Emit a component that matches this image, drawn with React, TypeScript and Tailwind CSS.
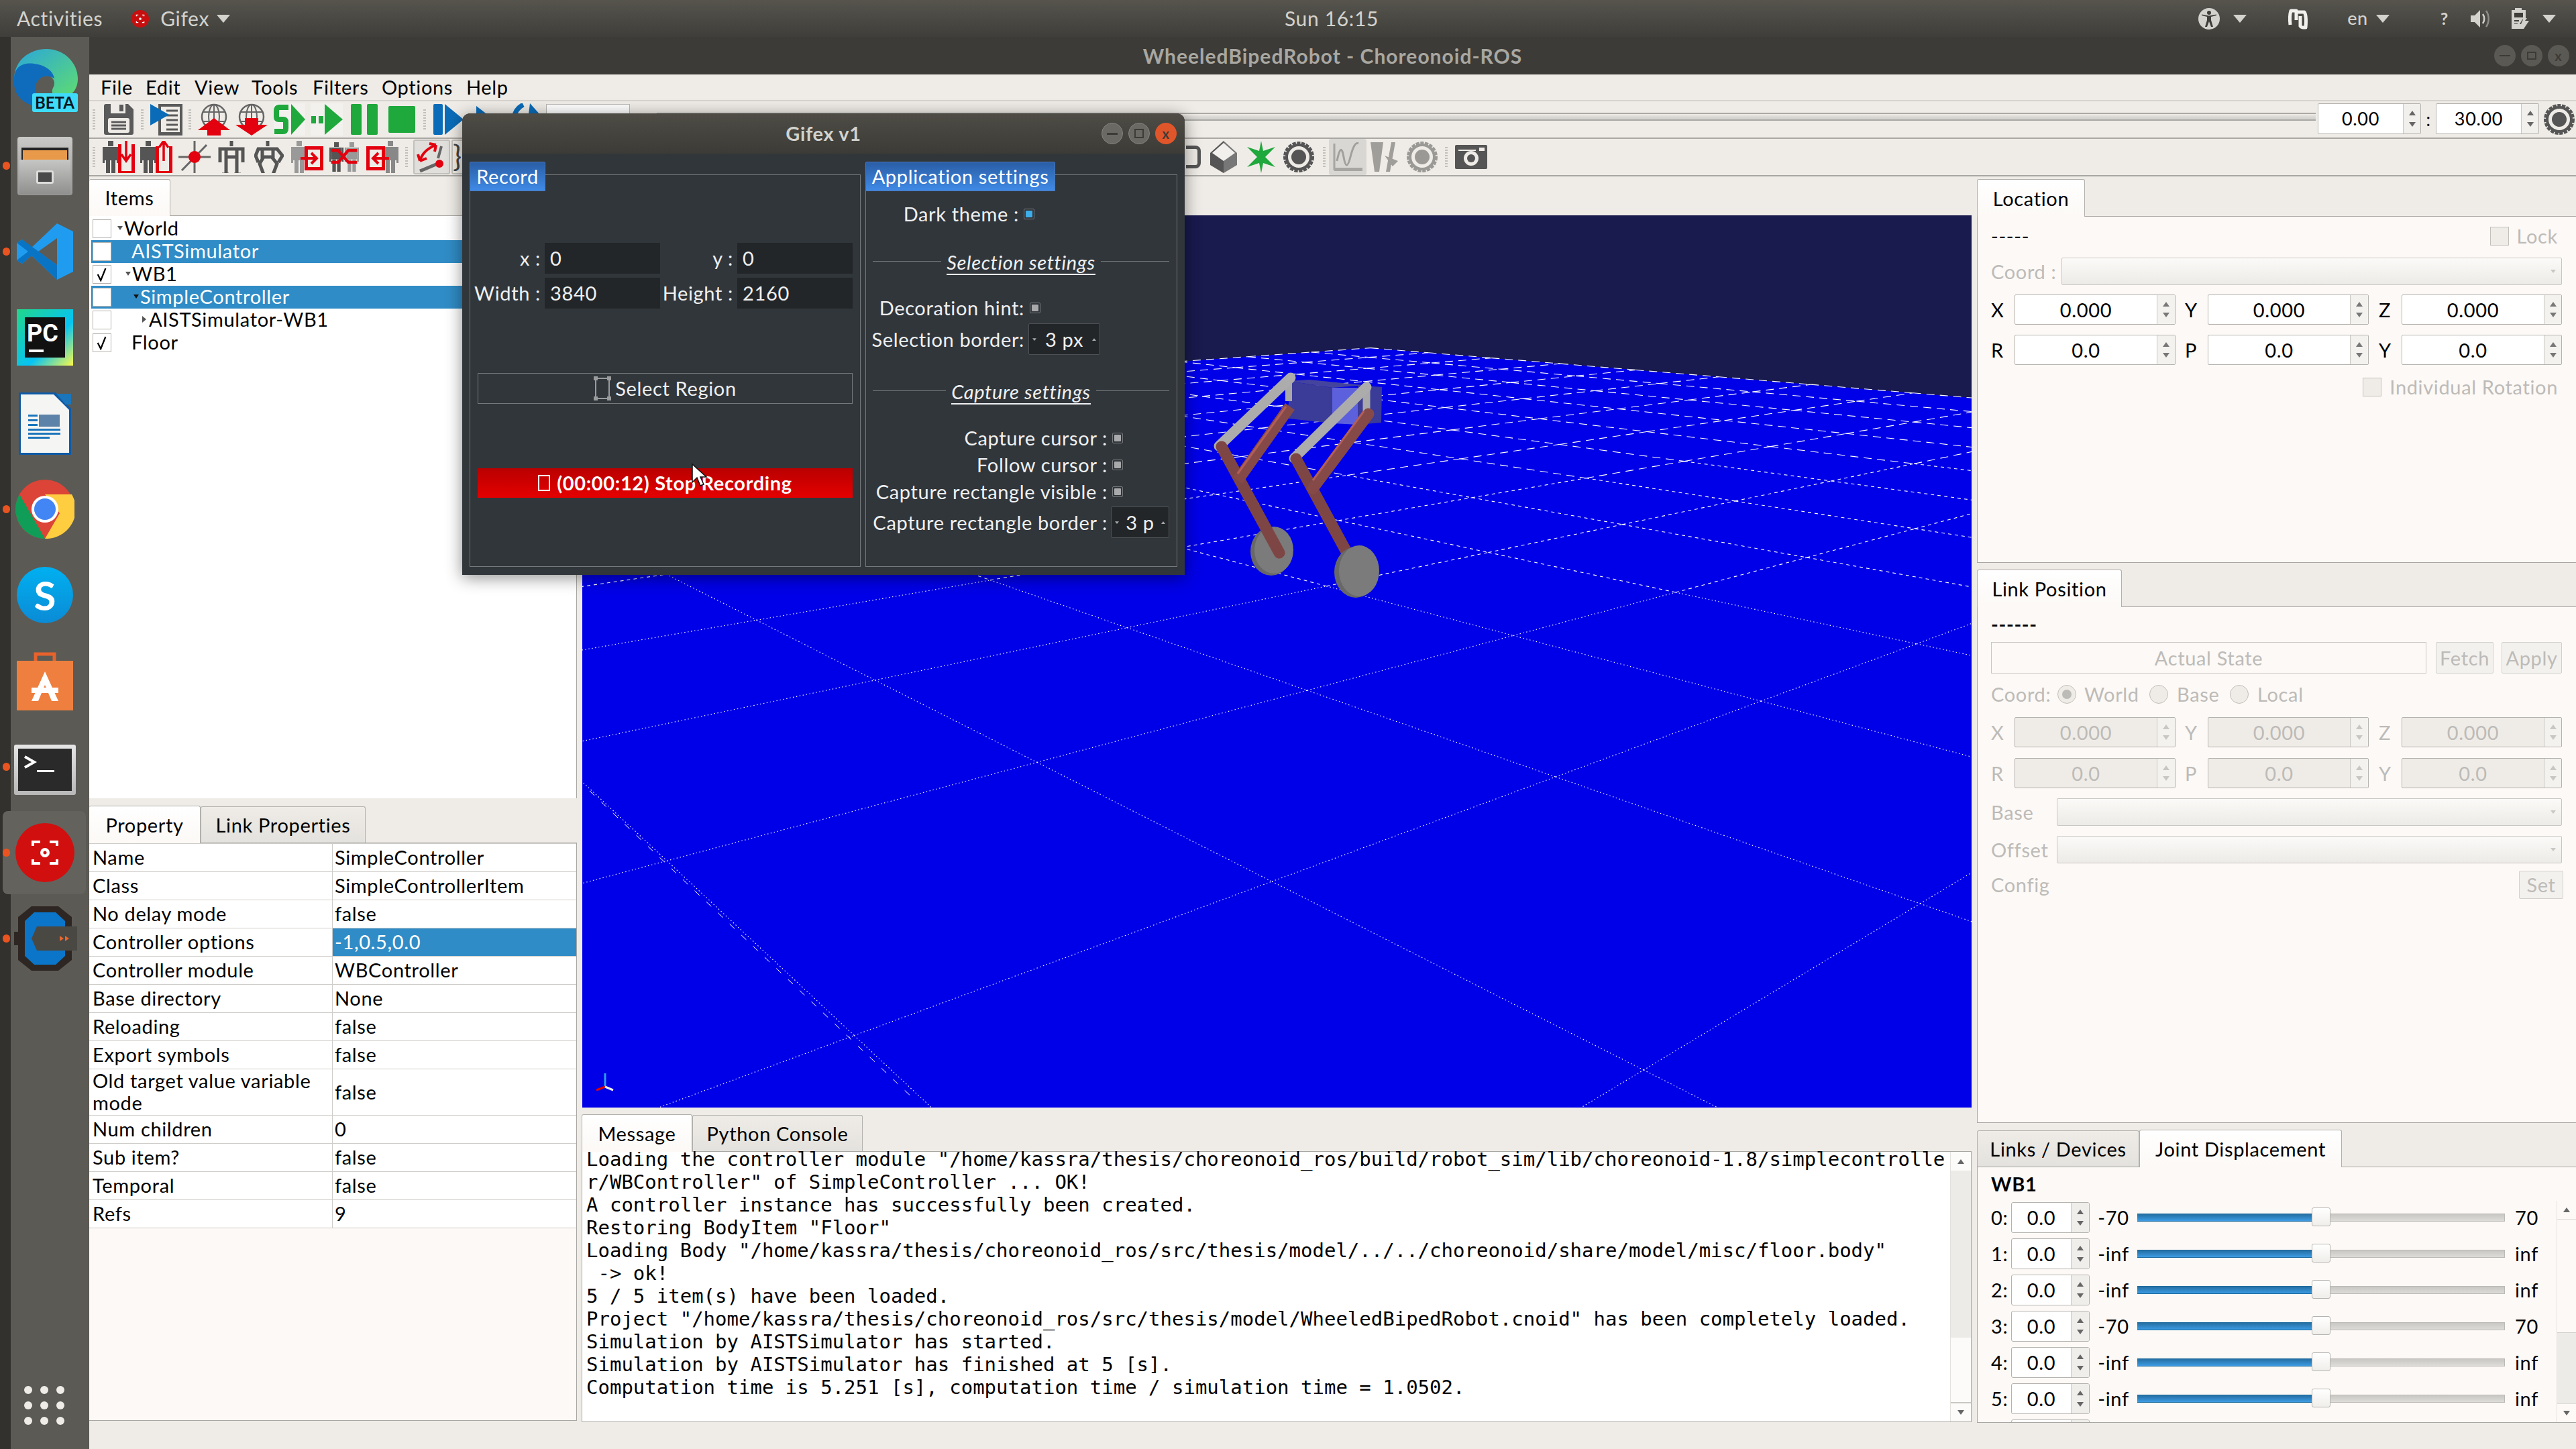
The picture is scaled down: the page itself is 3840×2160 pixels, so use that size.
import React from 'react';

const Tri = ({ className = '' }: { className?: string }) => (
    <svg viewBox="0 0 20 12" className={`w-[20px] h-[12px] ${className}`}>
        <path d="M0 0H20L10 12Z" fill="#d3d2cd" />
    </svg>
);

const TopBar = () => (
    <div className="relative h-[55px] shrink-0 flex items-center bg-gradient-to-b from-[#56544d] to-[#3f3e3a] text-[30px] text-[#d3d2cd]">
        <span className="ml-[25px]">Activities</span>
        <svg viewBox="0 0 30 30" className="ml-[42px] w-[28px] h-[30px]">
            <circle cx="15" cy="15" r="14" fill="#c80f0f" />
            <path d="M9 11V9H12M18 9H21V11M9 19V21H12M18 21H21V19" stroke="#fff" strokeWidth="1.5" fill="none" />
            <circle cx="15" cy="15" r="2" fill="#fff" />
        </svg>
        <span className="ml-[16px]">Gifex</span>
        <Tri className="ml-[11px]" />
        <span className="absolute left-[1985px] top-[5px] -translate-x-1/2">Sun 16:15</span>
        <div className="ml-auto flex items-center">
            <svg viewBox="0 0 32 32" className="w-[32px] h-[32px]">
                <circle cx="16" cy="16" r="16" fill="#d3d2cd" />
                <circle cx="16" cy="7" r="3" fill="#3f3e3a" />
                <path d="M5 11L13 13V18L10 28H13L16 20L19 28H22L19 18V13L27 11V9.5L16 11.5L5 9.5Z" fill="#3f3e3a" />
            </svg>
            <Tri className="ml-[20px]" />
            <svg viewBox="0 0 34 36" className="ml-[60px] w-[34px] h-[36px]">
                <path d="M5 27C4 18 4 12 6 6H14V20M14 8H26C29 12 29 20 28 31C24 31 21 31 20 29V14" fill="none" stroke="#f2f1ee" strokeWidth="5" strokeLinejoin="round" />
            </svg>
            <span className="ml-[56px] text-[27px] font-medium">en</span>
            <Tri className="ml-[12px]" />
            <span className="ml-[76px] text-[25px] font-bold">?</span>
            <svg viewBox="0 0 30 30" className="ml-[32px] w-[30px] h-[30px]">
                <path d="M1 10H7L15 2V28L7 20H1Z" fill="#d3d2cd" />
                <path d="M19 8C22 12 22 18 19 22" stroke="#d3d2cd" strokeWidth="2.5" fill="none" />
                <path d="M24 3C29 10 29 20 24 27" stroke="#8e8c87" strokeWidth="2.5" fill="none" />
            </svg>
            <svg viewBox="0 0 28 32" className="ml-[30px] w-[28px] h-[32px]">
                <path d="M7 0H17V3H23V17H18L14 24H2V3H7Z" fill="#d3d2cd" />
                <rect x="6" y="7" width="13" height="7" fill="#3f3e3a" />
                <path d="M6 19H13M6 24H11" stroke="#3f3e3a" strokeWidth="2" />
                <path d="M2 24V31H20L28 19H22L25 15H20L16 24Z" fill="#d3d2cd" />
            </svg>
            <Tri className="ml-[20px] mr-[30px]" />
        </div>
    </div>
);

const Slot = ({ dot, active, children }: { dot?: boolean; active?: boolean; children: React.ReactNode }) => (
    <div className="relative h-[128px] w-full flex items-center justify-center">
        {active && <div className="absolute left-[4px] top-[2px] w-[124px] h-[124px] rounded-[8px] bg-[#64625c]" />}
        {dot && <div className="absolute left-[4px] top-[58px] w-[11px] h-[12px] rounded-full bg-[#e95420]" />}
        <div className="relative ml-[1px]">{children}</div>
    </div>
);

const Dock = () => (
    <div className="w-[133px] h-full shrink-0 flex flex-col bg-[linear-gradient(90deg,#33312d_16px,#5c5a54_16px)] tracking-normal">
        <Slot>
            <div className="relative w-[97px] h-[96px]">
                <svg viewBox="0 0 97 96" className="w-[97px] h-[96px]">
                    <defs>
                        <linearGradient id="edgeA" x1="0" y1="0" x2="1" y2="1">
                            <stop offset="0" stopColor="#2aa6dc" />
                            <stop offset="1" stopColor="#5fdc70" />
                        </linearGradient>
                    </defs>
                    <path d="M2 48C2 18 26 2 50 2C78 2 97 24 97 46C97 66 84 74 72 74C62 74 56 68 60 60C66 50 58 40 46 40C30 40 22 54 24 66C10 60 2 56 2 48Z" fill="url(#edgeA)" />
                    <path d="M2 44C4 26 18 22 32 24C48 26 60 34 62 46C50 38 36 44 34 58C32 72 44 84 58 88C30 92 -2 80 2 44Z" fill="#0f6cbd" />
                </svg>
                <div className="absolute right-0 bottom-0 w-[68px] h-[28px] rounded-[3px] bg-[#3fdcfa] flex items-center justify-center text-[#0b1722] text-[24px] font-bold leading-none">BETA</div>
            </div>
        </Slot>
        <Slot dot>
            <div className="w-[82px] h-[87px] rounded-[4px] bg-gradient-to-b from-[#c9c9c7] to-[#98989a] relative">
                <div className="absolute left-[6px] top-[16px] w-[70px] h-[18px] bg-[#232323]" />
                <div className="absolute left-[8px] top-[20px] w-[66px] h-[14px] bg-[#e89a4a]" />
                <div className="absolute left-[3px] top-[34px] w-[76px] h-[52px] bg-gradient-to-b from-[#c6c6c4] to-[#8f8f8d]" />
                <div className="absolute left-[28px] top-[50px] w-[26px] h-[20px] border-[3px] border-[#dcdcda] bg-[#4a4a4a] rounded-[3px]" />
            </div>
        </Slot>
        <Slot dot>
            <svg viewBox="0 0 84 84" className="w-[84px] h-[84px]">
                <path d="M60 0L84 12V72L60 84L22 48L8 60L0 55V29L8 24L22 36Z" fill="#1f9cf0" />
                <path d="M60 22V62L32 42Z" fill="#5c5a54" />
                <path d="M0 29L8 24L60 62V84L22 48L8 60L0 55L17 42Z" fill="#0a74c4" />
            </svg>
        </Slot>
        <Slot>
            <svg viewBox="0 0 84 84" className="w-[84px] h-[84px]">
                <defs>
                    <linearGradient id="pc" x1="0" y1="0" x2="1" y2="1">
                        <stop offset="0" stopColor="#21d789" />
                        <stop offset="0.6" stopColor="#07c3f2" />
                        <stop offset="1" stopColor="#fcf84a" />
                    </linearGradient>
                </defs>
                <rect width="84" height="84" fill="url(#pc)" />
                <rect x="12" y="12" width="60" height="60" fill="#111" />
                <rect x="18" y="60" width="22" height="4" fill="#fff" />
                <text x="15" y="48" fontSize="36" fontWeight="700" fill="#fff" fontFamily="Roboto, sans-serif">PC</text>
            </svg>
        </Slot>
        <Slot>
            <svg viewBox="0 0 78 93" className="w-[78px] h-[93px]">
                <path d="M0 0H55L78 24V93H0Z" fill="#0f5aa6" />
                <path d="M3 3H52L75 26V90H3Z" fill="#f5f5f3" />
                <path d="M56 2H78V18H70Z" fill="#1b75bb" />
                <rect x="30" y="33" width="31" height="18" fill="#5d83a8" />
                <rect x="14" y="33" width="14" height="3" fill="#1b75bb" />
                <rect x="14" y="40" width="14" height="3" fill="#1b75bb" />
                <rect x="14" y="47" width="14" height="3" fill="#1b75bb" />
                <rect x="14" y="54" width="48" height="3" fill="#1b75bb" />
                <rect x="14" y="60" width="48" height="3" fill="#1b75bb" />
                <rect x="14" y="66" width="32" height="3" fill="#1b75bb" />
            </svg>
        </Slot>
        <Slot dot>
            <svg viewBox="0 0 88 88" className="w-[88px] h-[88px]">
                <circle cx="44" cy="44" r="44" fill="#db4437" />
                <path d="M6 22L28 60L44 88A44 44 0 0 1 6 22Z" fill="#0f9d58" />
                <path d="M44 22H84A44 44 0 0 1 44 88L66 50Z" fill="#ffcd40" />
                <circle cx="44" cy="44" r="20" fill="#fff" />
                <circle cx="44" cy="44" r="16" fill="#4285f4" />
            </svg>
        </Slot>
        <Slot>
            <div className="relative w-[84px] h-[84px] rounded-full bg-gradient-to-b from-[#00b0f0] to-[#0b8bd6] flex items-center justify-center text-white text-[60px] font-bold leading-none">S</div>
        </Slot>
        <Slot>
            <svg viewBox="0 0 84 88" className="w-[84px] h-[88px]">
                <path d="M28 14V4H56V14" fill="none" stroke="#e8622c" strokeWidth="5" />
                <rect y="14" width="84" height="74" fill="#ee7f3f" />
                <path d="M42 30L62 74H52L42 50L32 74H22Z" fill="#fff" />
                <rect x="22" y="54" width="40" height="8" fill="#fff" />
            </svg>
        </Slot>
        <Slot dot>
            <div className="w-[92px] h-[75px] rounded-[3px] bg-gradient-to-b from-[#e6e6e6] to-[#b8b8b8] p-[6px] mt-[8px]">
                <div className="w-full h-full bg-[#2a2a2a] relative">
                    <svg viewBox="0 0 60 30" className="absolute left-[8px] top-[8px] w-[60px] h-[30px]">
                        <path d="M2 4L16 12L2 20" fill="none" stroke="#fff" strokeWidth="4" />
                        <rect x="20" y="24" width="26" height="3" fill="#fff" />
                    </svg>
                </div>
            </div>
        </Slot>
        <Slot dot active>
            <svg viewBox="0 0 88 88" className="w-[88px] h-[88px]">
                <circle cx="44" cy="44" r="44" fill="#d10f0f" />
                <path d="M26 34V28H37M51 28H62V34M26 54V60H37M51 60H62V54" stroke="#fff" strokeWidth="4" fill="none" />
                <circle cx="44" cy="44" r="7" fill="#fff" />
                <circle cx="44" cy="44" r="2.5" fill="#d10f0f" />
            </svg>
        </Slot>
        <Slot dot>
            <svg viewBox="0 0 96 96" className="w-[96px] h-[96px]">
                <path d="M28 0H68L88 16V38H80V58H88V80L68 96H28L8 80V58H2V38H8V16Z" fill="#2e2622" />
                <path d="M32 9H64L78 22V74L64 87H32L18 74V22Z" fill="#0a75c9" />
                <path d="M36 30H96V66H36L28 48Z" fill="#4a4843" />
                <path d="M70 44L76 48L70 52ZM78 44L84 48L78 52Z" fill="#e9662c" />
            </svg>
        </Slot>
        <div className="mt-auto mb-[36px] ml-[36px] grid grid-cols-3 gap-x-[12px] gap-y-[11px] w-[60px]">
            {Array.from({ length: 9 }).map((_, i) => (
                <div key={i} className="w-[12px] h-[12px] rounded-full bg-[#efece7]" />
            ))}
        </div>
    </div>
);

const Grip = ({ className = '' }: { className?: string }) => (
    <div className={`w-[4px] h-[30px] border-l-[2px] border-r-[2px] border-dotted border-[#c2c0bb] shrink-0 ${className}`} />
);

const Ico = ({ w = 48, h = 48, className = '', vb, children }: { w?: number; h?: number; className?: string; vb?: string; children: React.ReactNode }) => (
    <svg viewBox={vb ?? `0 0 ${w} ${h}`} width={w} height={h} className={`shrink-0 ${className}`}>
        {children}
    </svg>
);

const Globe = ({ up }: { up?: boolean }) => (
    <>
        <circle cx="24" cy="20" r="18" fill="none" stroke="#666" strokeWidth="2.5" />
        <ellipse cx="24" cy="20" rx="8" ry="18" fill="none" stroke="#666" strokeWidth="2" />
        <path d="M24 2V38M7 13H41M7 27H41" stroke="#666" strokeWidth="2" />
        {up ? <path d="M24 22L48 40H34V48H14V40H0Z" fill="#e3000f" /> : <path d="M14 22H34V32H48L24 48L0 32H14Z" fill="#e3000f" />}
    </>
);

const Person = ({ x = 0, fill = '#555', scale = 1 }: { x?: number; fill?: string; scale?: number }) => (
    <g transform={`translate(${x} 0) scale(${scale} 1)`} fill={fill}>
        <rect x="8" y="0" width="8" height="8" />
        <rect x="3" y="9" width="18" height="20" />
        <rect x="0" y="9" width="3" height="24" />
        <rect x="21" y="9" width="3" height="24" />
        <rect x="5" y="29" width="6" height="21" />
        <rect x="13" y="29" width="6" height="21" />
    </g>
);

const Stick = ({ bent }: { bent?: boolean }) => (
    <g fill="none" stroke="#555" strokeWidth="5">
        <path d="M20 0V8" />
        {bent ? <path d="M6 32L2 22L6 12H34L42 22L36 32M12 12V24H28V12M14 24L8 34L14 50M26 24L34 34L28 50" /> : <path d="M3 32V12H37V32M12 12V24H28V12M12 24V50M28 24V50M6 50H16M24 50H34" />}
    </g>
);

const Toolbars = () => (
    <>
        <div className="relative z-0 h-[56px] shrink-0 flex items-center border-t-[2px] border-[#d7d4cf] pl-[5px]">
            <Grip />
            <Ico className="ml-[11px]">
                <path d="M2 4Q2 1 5 1H38L46 9V44Q46 47 43 47H5Q2 47 2 44Z" fill="#5a5a5a" />
                <rect x="12" y="1" width="22" height="14" fill="#efece7" />
                <rect x="25" y="2" width="6" height="10" fill="#5a5a5a" />
                <rect x="8" y="22" width="32" height="22" rx="3" fill="#efece7" />
                <path d="M13 28H35M13 33H35M13 38H35" stroke="#5a5a5a" strokeWidth="3" />
            </Ico>
            <Grip className="ml-[9px]" />
            <Ico className="ml-[10px]">
                <rect x="12" y="1" width="36" height="47" fill="#5a5a5a" />
                <rect x="16" y="5" width="28" height="38" fill="#efece7" />
                <path d="M24 11H41M24 18H41M24 25H41M24 32H41M24 39H41" stroke="#5a5a5a" strokeWidth="3" />
                <path d="M0 1L28 17L0 33Z" fill="#0a6cb8" />
            </Ico>
            <Grip className="ml-[9px]" />
            <Ico className="ml-[10px]"><Globe up /></Ico>
            <Ico className="ml-[8px]"><Globe /></Ico>
            <div className="ml-[9px] w-[47px] h-[48px] bg-[#f3f1ee]">
                <Ico w={47}>
                    <path d="M22 6H8Q4 6 4 12V20Q4 24 8 24H14Q18 24 18 28V37Q18 42 14 42H1" fill="none" stroke="#1fa83c" strokeWidth="8" />
                    <path d="M26 1L47 24L26 47Z" fill="#1fa83c" />
                </Ico>
            </div>
            <div className="ml-[8px] w-[48px] h-[48px] bg-[#f3f1ee]">
                <Ico>
                    <rect x="1" y="19" width="7" height="11" fill="#1fa83c" />
                    <rect x="12" y="19" width="7" height="11" fill="#1fa83c" />
                    <path d="M21 1L48 24L21 47Z" fill="#1fa83c" />
                </Ico>
            </div>
            <div className="ml-[12px] w-[40px] h-[46px] flex justify-between">
                <div className="w-[16px] h-full rounded-[2px] bg-[#1fa83c]" />
                <div className="w-[16px] h-full rounded-[2px] bg-[#1fa83c]" />
            </div>
            <div className="ml-[16px] w-[40px] h-[40px] rounded-[2px] bg-[#1fa83c]" />
            <Grip className="ml-[12px]" />
            <Ico w={48} className="ml-[10px]">
                <rect x="1" y="1" width="14" height="46" rx="2" fill="#0a6cb8" />
                <path d="M18 1L46 24L18 47Z" fill="#0a6cb8" />
            </Ico>
            <Ico w={26} className="ml-[17px]"><path d="M0 4L26 24L0 47Z" fill="#0a6cb8" /></Ico>
            <Ico w={46} className="ml-[26px]">
                <path d="M18 2Q6 8 4 22" stroke="#0a6cb8" strokeWidth="7" fill="none" />
                <path d="M28 0L44 18L26 16Z" fill="#0a6cb8" />
            </Ico>
            <div className="ml-[6px] w-[125px] h-[46px] bg-white border border-[#bab8b4] shrink-0" />
            <div className="ml-[20px] w-[10px] h-[10px] rounded-[3px] border border-[#aaa] shrink-0" />
            <div className="ml-[10px] flex-1 h-[12px] border-y-[2px] border-[#aba9a5] bg-gradient-to-b from-[#efece7] via-[#dcdad6] to-[#d2d0cc] -mt-[8px]" />
            <TimeSpin value="0.00" className="ml-[3px] -mt-[2px]" />
            <span className="w-[22px] text-center text-[26px] leading-none">:</span>
            <TimeSpin value="30.00" className="-mt-[2px]" />
            <Ico className="ml-[6px] mr-[1px]"><Gear /></Ico>
        </div>
        <div className="h-[58px] shrink-0 flex items-center border-y-[2px] border-[#a9a7a3] pl-[5px]">
            <Grip />
            <Ico className="ml-[11px]">
                <Person fill="#555" />
                <rect x="23" y="5" width="25" height="45" fill="#e3000f" />
                <rect x="28" y="5" width="15" height="40" fill="#efece7" />
                <path d="M35 0V28M28 20L35 30L42 20" stroke="#e3000f" strokeWidth="3.5" fill="none" />
            </Ico>
            <Ico className="ml-[8px]">
                <Person fill="#555" />
                <rect x="23" y="8" width="25" height="42" fill="#e3000f" />
                <rect x="28" y="8" width="15" height="37" fill="#efece7" />
                <path d="M35 30V2M28 10L35 0L42 10" stroke="#e3000f" strokeWidth="3.5" fill="none" />
            </Ico>
            <Ico className="ml-[9px]">
                <path d="M24 0V48M0 24H48M5 44L42 6" stroke="#666" strokeWidth="3" fill="none" />
                <circle cx="24" cy="24" r="9" fill="#e3000f" />
            </Ico>
            <Ico w={40} className="ml-[11px]"><Stick /></Ico>
            <Ico w={44} className="ml-[14px]"><Stick bent /></Ico>
            <Ico className="ml-[11px]">
                <Person fill="#999" />
                <rect x="20" y="8" width="28" height="36" fill="#e3000f" />
                <rect x="25" y="13" width="18" height="26" fill="#efece7" />
                <path d="M14 26H37M30 18L38 26L30 34" stroke="#e3000f" strokeWidth="4" fill="none" />
            </Ico>
            <Ico w={44} vb="0 0 50 50" className="ml-[9px]">
                <Person fill="#555" />
                <Person x={26} fill="#999" />
                <path d="M3 34L15 34L32 14L47 14M3 14L15 14L32 34L47 34" stroke="#e3000f" strokeWidth="5" fill="none" />
            </Ico>
            <Ico className="ml-[11px]">
                <Person x={24} fill="#888" />
                <rect x="0" y="8" width="28" height="36" fill="#e3000f" />
                <rect x="5" y="13" width="18" height="26" fill="#efece7" />
                <path d="M34 26H11M18 18L10 26L18 34" stroke="#e3000f" strokeWidth="4" fill="none" />
            </Ico>
            <Grip className="ml-[10px]" />
            <div className="ml-[8px] w-[55px] h-[52px] rounded-[3px] border-[2px] border-[#c2c0bb] bg-[#e1dfdb] flex items-center justify-center shrink-0">
                <Ico>
                    <path d="M6 30Q10 14 30 6M6 30L3 20M6 30L16 26M30 6L20 4M30 6L28 16" stroke="#e3000f" strokeWidth="4" fill="none" />
                    <path d="M38 8L33 26" stroke="#666" strokeWidth="4" />
                    <path d="M6 45L30 35" stroke="#666" strokeWidth="5" />
                    <circle cx="35" cy="34" r="6" fill="#e3000f" />
                </Ico>
            </div>
            <div className="ml-[2px] w-[30px] h-[52px] rounded-[3px] border-[2px] border-[#c2c0bb] text-[#444] text-[44px] leading-none shrink-0">{'}'}</div>
            <div className="ml-[1065px] w-[22px] h-[34px] rounded-r-[8px] border-y-[5px] border-r-[5px] border-[#555] shrink-0" />
            <Ico className="ml-[10px]">
                <path d="M24 0L44 18V36L24 48Z" fill="#777" />
                <path d="M24 0L4 18V36L24 48Z" fill="#555" />
                <path d="M24 3L41 18L24 30L7 18Z" fill="#f2f0ec" />
            </Ico>
            <Ico w={42} className="ml-[11px]"><path d="M21 0L24 15L42 9L27 24L42 39L24 33L21 48L18 33L0 39L15 24L0 9L18 15Z" fill="#1fa83c" /></Ico>
            <Ico className="ml-[11px]"><Gear /></Ico>
            <Grip className="ml-[12px]" />
            <div className="ml-[5px] w-[56px] h-[54px] rounded-[3px] bg-[#d9d7d3] flex items-center justify-center shrink-0">
                <Ico w={48} h={48}>
                    <path d="M4 4V42H46" stroke="#a8a6a2" strokeWidth="3" fill="none" />
                    <path d="M8 30Q14 0 18 24T28 24T40 4" stroke="#a2a09c" strokeWidth="3" fill="none" />
                    <rect x="4" y="40" width="42" height="5" fill="#a8a6a2" />
                </Ico>
            </div>
            <Ico w={45} className="ml-[3px]">
                <path d="M3 2H22L16 46H9ZM26 46L34 2H40L32 46ZM24 22L44 30L36 38Z" fill="#a09e9a" />
            </Ico>
            <Ico className="ml-[11px]"><Gear fill="#9b9995" /></Ico>
            <Grip className="ml-[10px]" />
            <Ico w={48} h={36} className="ml-[11px]">
                <rect width="48" height="36" rx="2" fill="#555" />
                <circle cx="24" cy="20" r="11" fill="#efece7" />
                <circle cx="24" cy="20" r="6" fill="#555" />
                <rect x="36" y="4" width="8" height="5" fill="#efece7" />
                <rect x="5" y="7" width="26" height="2" fill="#efece7" />
            </Ico>
        </div>
    </>
);

const Gear = ({ fill = '#555' }: { fill?: string }) => (
    <>
        <circle cx="24" cy="24" r="20" fill="none" stroke={fill} strokeWidth="6" strokeDasharray="5 1.5" />
        <circle cx="24" cy="24" r="18" fill="none" stroke={fill} strokeWidth="4" />
        <circle cx="24" cy="24" r="11" fill={fill} />
    </>
);

const TimeSpin = ({ value, className = '' }: { value: string; className?: string }) => (
    <div className={`w-[154px] h-[46px] shrink-0 flex border border-[#b5b3af] rounded-[2px] bg-white ${className}`}>
        <div className="flex-1 flex items-center justify-center text-[27px]">{value}</div>
        <SpinArrows className="w-[26px] bg-[#f2f0ec] border-l border-[#c9c7c3]" />
    </div>
);

const SpinArrows = ({ className = '', color = '#666' }: { className?: string; color?: string }) => (
    <div className={`h-full flex flex-col items-center justify-around py-[5px] shrink-0 ${className}`}>
        <svg viewBox="0 0 10 7" className="w-[10px] h-[7px]"><path d="M0 7H10L5 0Z" fill={color} /></svg>
        <svg viewBox="0 0 10 7" className="w-[10px] h-[7px]"><path d="M0 0H10L5 7Z" fill={color} /></svg>
    </div>
);

const Tab = ({ label, active, className = '' }: { label: string; active?: boolean; className?: string }) => (
    <div
        className={`flex items-center justify-center border border-b-0 border-[#b3b1ad] rounded-t-[3px] ${
            active ? 'bg-gradient-to-b from-white to-[#fcf9f6] h-[56px] relative z-10 -mb-px' : 'bg-gradient-to-b from-[#efece7] to-[#e4e2de] h-[54px]'
        } ${className}`}
    >
        {label}
    </div>
);

const TreeRow = ({ label, check, selected, indent, arrow }: { label: string; check?: boolean; selected?: boolean; indent: string; arrow?: 'down' | 'right' }) => (
    <div className="relative h-[34px] flex items-center pl-[5px]">
        {selected && <div className="absolute left-[3px] right-0 top-0 bottom-0 bg-[#308cc6]" />}
        <div className="relative w-[28px] h-[28px] border border-[#b5b3af] bg-white flex items-center justify-center shrink-0 text-[24px] leading-none text-black">
            {check && (
                <svg viewBox="0 0 20 24" className="w-[18px] h-[22px]">
                    <path d="M3 12L8 22L16 2" stroke="#000" strokeWidth="2.5" fill="none" />
                </svg>
            )}
        </div>
        <div className={`relative flex items-center -mt-[2px] ${indent}`}>
            {arrow === 'down' && <svg viewBox="0 0 8 6" className="w-[8px] h-[6px] mr-[2px]"><path d="M0 0H8L4 6Z" fill={selected ? '#111' : '#555'} /></svg>}
            {arrow === 'right' && <svg viewBox="0 0 6 10" className="w-[6px] h-[10px] mr-[4px]"><path d="M0 0V10L6 5Z" fill="#555" /></svg>}
            <span className={selected ? 'text-white' : 'text-black'}>{label}</span>
        </div>
    </div>
);

const props: [string, string][] = [
    ['Name', 'SimpleController'],
    ['Class', 'SimpleControllerItem'],
    ['No delay mode', 'false'],
    ['Controller options', '-1,0.5,0.0'],
    ['Controller module', 'WBController'],
    ['Base directory', 'None'],
    ['Reloading', 'false'],
    ['Export symbols', 'false'],
    ['Old target value variable mode', 'false'],
    ['Num children', '0'],
    ['Sub item?', 'false'],
    ['Temporal', 'false'],
    ['Refs', '9'],
];

const LeftColumn = () => (
    <div className="w-[727px] shrink-0 pt-[3px] flex flex-col">
        <div className="flex h-[55px] items-end">
            <Tab label="Items" active className="w-[121px] !h-[55px] border-l-0" />
        </div>
        <div className="h-[869px] border-t border-r border-[#a9a7a3] bg-white flex flex-col pt-[2px]">
            <TreeRow label="World" indent="ml-[9px]" arrow="down" />
            <TreeRow label="AISTSimulator" selected indent="ml-[30px]" />
            <TreeRow label="WB1" check indent="ml-[21px]" arrow="down" />
            <TreeRow label="SimpleController" selected indent="ml-[33px]" arrow="down" />
            <TreeRow label="AISTSimulator-WB1" indent="ml-[46px]" arrow="right" />
            <TreeRow label="Floor" check indent="ml-[30px]" />
        </div>
        <div className="flex h-[56px] items-end mt-[10px]">
            <Tab label="Property" active className="w-[166px] border-l-0" />
            <Tab label="Link Properties" className="w-[246px]" />
        </div>
        <div className="h-[862px] border border-l-0 border-[#a9a7a3] bg-[#fcf9f6]">
            <div className="border-b border-[#c9c7c3]">
                {props.map(([k, v]) => (
                    <div key={k} className={`grid grid-cols-[363px_1fr] border-t border-[#cfcdc9] bg-white leading-[33px] ${k.startsWith('Old') ? 'h-[69px]' : 'h-[42px]'}`}>
                        <div className="pl-[5px] pb-[3px] flex items-center border-r border-[#cfcdc9]">{k}</div>
                        <div className={`pl-[3px] pb-[3px] flex items-center ${v.startsWith('-1') ? 'bg-[#308cc6] text-white' : ''}`}>{v}</div>
                    </div>
                ))}
            </div>
        </div>
    </div>
);

type Pt = [number, number];
const project = (u: number, v: number): { p: Pt; w: number } => {
    const w = 1 - 0.2254 * u + 0.1909 * v;
    const x = (-1.6 * -u + 865.9 * v + 1897) / w;
    const y = (-78.5 * u + 65.1 * v + 1314) / w;
    return { p: [x, y], w };
};

const dash = (w: number) => (w > 2.6 ? '12 8' : w > 1.7 ? '5 5' : '1.5 3.5');

const gridSegments = () => {
    const out: { a: Pt; b: Pt; d: string }[] = [];
    const add = (a: { p: Pt; w: number }, b: { p: Pt; w: number }) => {
        if (a.w < 0.12 || b.w < 0.12) return;
        if (Math.max(a.p[0], b.p[0]) < 869 || Math.min(a.p[0], b.p[0]) > 2940) return;
        if (Math.min(a.p[1], b.p[1]) > 1651) return;
        out.push({ a: a.p, b: b.p, d: dash(Math.min(a.w, b.w)) });
    };
    for (let i = -11; i <= 11; i++) {
        for (let j = -11; j < 11; j++) {
            add(project(j, i), project(j + 1, i));
            add(project(i, j), project(i, j + 1));
        }
    }
    return out;
};

const Robot = () => (
    <g>
        <path d="M1922 568L1953 566L2061 577L2025 575L1987 578Z" fill="#44449e" />
        <path d="M1922 568L1987 578V631L1922 624Z" fill="#3b3b98" />
        <path d="M1987 578H2025V633L1987 631Z" fill="#5c60dc" />
        <path d="M2025 575L2061 577L2060 630L2025 633Z" fill="#3b3b98" />
        <ellipse cx="1896" cy="822" rx="31" ry="36" fill="#686868" />
        <ellipse cx="1900" cy="820" rx="29" ry="35" fill="#7b7b7b" />
        <path d="M1922 564V598" stroke="#a9a9a9" strokeWidth="10" />
        <path d="M1925 563L1818 665" stroke="#acacac" strokeWidth="15" strokeLinecap="round" />
        <path d="M1822 666L1908 824" stroke="#7d4644" strokeWidth="17" strokeLinecap="round" />
        <path d="M1924 606L1846 716" stroke="#854a48" strokeWidth="17" />
        <path d="M1918 606L1846 706" stroke="#b25e58" strokeWidth="3" />
        <path d="M2038 577V613" stroke="#a9a9a9" strokeWidth="11" />
        <path d="M2038 577L1930 683" stroke="#acacac" strokeWidth="15" strokeLinecap="round" />
        <path d="M1933 684L2010 826" stroke="#7d4644" strokeWidth="17" strokeLinecap="round" />
        <path d="M2041 617L1958 728" stroke="#854a48" strokeWidth="17" strokeLinecap="round" />
        <path d="M2034 613L1958 716" stroke="#b25e58" strokeWidth="3" />
        <ellipse cx="2022" cy="853" rx="32" ry="38" fill="#686868" />
        <ellipse cx="2027" cy="851" rx="30" ry="38" fill="#7b7b7b" />
    </g>
);

const Viewport = () => {
    const segs = gridSegments();
    const corner = project(-11, 11).p;
    const left = project(-11, 0).p;
    const right = project(-3, 11).p;
    return (
        <div className="mt-[58px] w-[2071px] h-[1330px] bg-[#191a4d] overflow-hidden">
            <svg viewBox="869 321 2071 1330" className="block w-[2071px] h-[1330px]">
                <polygon points={`${corner} ${right} 3100,1700 800,1700 ${left}`} fill="#0000e8" />
                <g stroke="#fff" strokeWidth="1.1" fill="none">
                    {segs.map((s, i) => (
                        <line key={i} x1={s.a[0]} y1={s.a[1]} x2={s.b[0]} y2={s.b[1]} strokeDasharray={s.d} />
                    ))}
                </g>
                <line x1="880" y1="1179" x2="1364" y2="1639" stroke="#fff" strokeWidth="1" strokeDasharray="10 14" />
                <Robot />
                <g strokeWidth="3" fill="none">
                    <path d="M903 1620V1600" stroke="#2aa0e8" />
                    <path d="M903 1620L890 1625" stroke="#e00000" />
                    <path d="M903 1620L915 1625" stroke="#eeeeee" />
                </g>
            </svg>
        </div>
    );
};

const messages = [
    'Loading the controller module "/home/kassra/thesis/choreonoid_ros/build/robot_sim/lib/choreonoid-1.8/simplecontrolle',
    'r/WBController" of SimpleController ... OK!',
    'A controller instance has successfully been created.',
    'Restoring BodyItem "Floor"',
    'Loading Body "/home/kassra/thesis/choreonoid_ros/src/thesis/model/../../choreonoid/share/model/misc/floor.body"',
    ' -> ok!',
    '5 / 5 item(s) have been loaded.',
    'Project "/home/kassra/thesis/choreonoid_ros/src/thesis/model/WheeledBipedRobot.cnoid" has been completely loaded.',
    'Simulation by AISTSimulator has started.',
    'Simulation by AISTSimulator has finished at 5 [s].',
    'Computation time is 5.251 [s], computation time / simulation time = 1.0502.',
];

const Messages = () => (
    <div className="w-[2072px] -ml-px flex flex-col">
        <div className="flex h-[56px] items-end mt-[9px]">
            <Tab label="Message" active className="w-[165px]" />
            <Tab label="Python Console" className="w-[254px]" />
        </div>
        <div className="h-[404px] flex border border-[#a9a7a3] bg-white">
            <div className="flex-1 overflow-hidden pl-[6px] -mt-[6px] font-['DejaVu_Sans_Mono',monospace] tracking-normal text-[29px] leading-[34px] whitespace-pre text-black">
                {messages.map((m, i) => (
                    <div key={i}>{m}</div>
                ))}
            </div>
            <div className="w-[31px] shrink-0 flex flex-col bg-[#fcfbf9] border-l border-[#e4e2de]">
                <div className="h-[28px] flex items-center justify-center"><svg viewBox="0 0 10 7" className="w-[10px] h-[7px]"><path d="M0 7H10L5 0Z" fill="#666" /></svg></div>
                <div className="h-[249px] bg-[#ecebe7]" />
                <div className="flex-1" />
                <div className="h-[29px] border-t-[2px] border-[#c9c7c3] flex items-center justify-center"><svg viewBox="0 0 10 7" className="w-[10px] h-[7px]"><path d="M0 0H10L5 7Z" fill="#666" /></svg></div>
            </div>
        </div>
    </div>
);

const Field = ({ value, disabled, className = '' }: { value: string; disabled?: boolean; className?: string }) => (
    <div className={`h-[45px] flex border border-[#b5b3af] rounded-[2px] overflow-hidden ${disabled ? 'bg-[#efece7] text-[#bdbbb8]' : 'bg-white text-black'} ${className}`}>
        <div className="w-[211px] shrink-0 flex items-center justify-center">{value}</div>
        <SpinArrows className="flex-1 bg-[#f4f2ee] border-l border-[#c9c7c3]" color={disabled ? '#c9c7c3' : '#777'} />
    </div>
);

const FieldRow = ({ labels, values, disabled, className = '' }: { labels: string[]; values: string; disabled?: boolean; className?: string }) => (
    <div className={`flex items-center ${disabled ? 'text-[#bdbbb8]' : 'text-black'} ${className}`}>
        <span className="w-[35px] shrink-0">{labels[0]}</span>
        <Field value={values} disabled={disabled} className="w-[240px]" />
        <span className="w-[48px] shrink-0 pl-[14px]">{labels[1]}</span>
        <Field value={values} disabled={disabled} className="w-[240px]" />
        <span className="w-[49px] shrink-0 pl-[15px]">{labels[2]}</span>
        <Field value={values} disabled={disabled} className="w-[239px]" />
    </div>
);

const Combo = ({ className = '' }: { className?: string }) => (
    <div className={`h-[41px] border border-[#c9c7c3] rounded-[2px] bg-gradient-to-b from-[#fcfaf8] to-[#ecebe7] flex items-center justify-end pr-[8px] ${className}`}>
        <svg viewBox="0 0 10 6" className="w-[8px] h-[5px]"><path d="M0 0H10L5 6Z" fill="#c9c7c3" /></svg>
    </div>
);

const Radio = ({ on }: { on?: boolean }) => (
    <div className="w-[28px] h-[28px] rounded-full border border-[#c2c0bb] bg-[#efece7] flex items-center justify-center shrink-0">
        {on && <div className="w-[14px] h-[14px] rounded-full bg-[#bdbbb8]" />}
    </div>
);

const joints: [string, string, string][] = [
    ['0:', '-70', '70'],
    ['1:', '-inf', 'inf'],
    ['2:', '-inf', 'inf'],
    ['3:', '-70', '70'],
    ['4:', '-inf', 'inf'],
    ['5:', '-inf', 'inf'],
    ['', '', ''],
];

const JointRow = ({ n, min, max }: { n: string; min: string; max: string }) => (
    <div className="h-[46px] mb-[8px] flex items-center shrink-0">
        <span className="w-[30px] shrink-0">{n}</span>
        <div className="w-[117px] h-[46px] flex border border-[#b5b3af] rounded-[3px] bg-white shrink-0 overflow-hidden">
            <div className="w-[88px] shrink-0 flex items-center justify-center">{n && '0.0'}</div>
            <SpinArrows className="flex-1 bg-[#f0eeea] border-l border-[#c9c7c3]" />
        </div>
        <span className="w-[71px] shrink-0 text-center">{min}</span>
        <div className="relative w-[548px] h-[12px] shrink-0 flex rounded-[2px]">
            <div className="w-[260px] bg-gradient-to-b from-[#256fa3] to-[#3d9be3] border-y border-[#1e6a9e]" />
            <div className="flex-1 bg-gradient-to-b from-[#c9c7c3] to-[#dedcd8] border border-[#bcbab6]" />
            <div className="absolute left-[260px] -top-[9px] w-[28px] h-[28px] rounded-[3px] border border-[#b5b3af] bg-gradient-to-b from-white to-[#f0eeea]" />
        </div>
        <span className="w-[65px] shrink-0 text-center">{max}</span>
    </div>
);

const RightColumn = () => (
    <div className="flex-1 pt-[4px] flex flex-col ml-[8px]">
        <div className="flex h-[55px] items-end">
            <Tab label="Location" active className="w-[161px]" />
        </div>
        <div className="h-[517px] border border-r-0 border-[#a9a7a3] bg-[#fcf9f6] pl-[20px] flex flex-col">
            <div className="mt-[12px] h-[34px] flex items-center">
                <span>-----</span>
                <div className="ml-auto mr-[27px] flex items-center text-[#bdbbb8]">
                    <div className="w-[28px] h-[28px] border border-[#c2c0bb] bg-[#efece7] mr-[12px]" />
                    Lock
                </div>
            </div>
            <div className="mt-[15px] h-[41px] flex items-center text-[#bdbbb8]">
                <span className="w-[105px] shrink-0">Coord :</span>
                <Combo className="w-[746px]" />
            </div>
            <FieldRow labels={['X', 'Y', 'Z']} values="0.000" className="mt-[14px]" />
            <FieldRow labels={['R', 'P', 'Y']} values="0.0" className="mt-[15px]" />
            <div className="mt-[19px] mr-[27px] h-[28px] flex items-center justify-end text-[#bdbbb8]">
                <div className="w-[28px] h-[28px] border border-[#c2c0bb] bg-[#efece7] mr-[12px]" />
                Individual Rotation
            </div>
        </div>
        <div className="flex h-[56px] items-end mt-[9px]">
            <Tab label="Link Position" active className="w-[216px]" />
        </div>
        <div className="h-[770px] border border-r-0 border-[#a9a7a3] bg-[#fcf9f6] pl-[20px] flex flex-col text-[#bdbbb8]">
            <div className="mt-[8px] h-[34px] flex items-center text-black font-bold">------</div>
            <div className="mt-[10px] flex h-[47px] text-[#bdbbb8]">
                <div className="w-[649px] border border-[#c9c7c3] flex items-center justify-center">Actual State</div>
                <div className="ml-[14px] w-[86px] border border-[#d3d1cd] rounded-[2px] bg-[#f3f1ee] flex items-center justify-center">Fetch</div>
                <div className="ml-[12px] w-[90px] border border-[#d3d1cd] rounded-[2px] bg-[#f3f1ee] flex items-center justify-center">Apply</div>
            </div>
            <div className="mt-[14px] h-[34px] flex items-center">
                <span className="w-[99px] shrink-0">Coord:</span>
                <Radio on />
                <span className="w-[109px] shrink-0 pl-[12px]">World</span>
                <Radio />
                <span className="w-[92px] shrink-0 pl-[13px]">Base</span>
                <Radio />
                <span className="pl-[13px]">Local</span>
            </div>
            <FieldRow labels={['X', 'Y', 'Z']} values="0.000" disabled className="mt-[17px]" />
            <FieldRow labels={['R', 'P', 'Y']} values="0.0" disabled className="mt-[16px]" />
            <div className="mt-[14px] flex items-center">
                <span className="w-[98px] shrink-0">Base</span>
                <Combo className="w-[753px]" />
            </div>
            <div className="mt-[12px] flex items-center">
                <span className="w-[98px] shrink-0">Offset</span>
                <Combo className="w-[753px]" />
            </div>
            <div className="mt-[10px] flex items-center justify-between h-[42px]">
                <span>Config</span>
                <div className="mr-[19px] w-[66px] h-[42px] border border-[#d3d1cd] rounded-[2px] bg-[#f3f1ee] flex items-center justify-center">Set</div>
            </div>
        </div>
        <div className="flex h-[56px] items-end mt-[9px]">
            <Tab label="Links / Devices" className="w-[242px]" />
            <Tab label="Joint Displacement" active className="w-[302px]" />
        </div>
        <div className="h-[382px] border border-r-0 border-[#a9a7a3] bg-[#fcf9f6] pl-[20px] flex flex-col overflow-hidden">
            <div className="mt-[7px] h-[36px] flex items-center font-bold">WB1</div>
            <div className="flex-1 min-h-0 flex mt-[7px]">
                <div className="flex-1 overflow-hidden pt-[2px]">
                    {joints.map(([n, a, b], i) => (
                        <JointRow key={i} n={n} min={a} max={b} />
                    ))}
                </div>
                <div className="w-[29px] shrink-0 flex flex-col border-l border-[#e4e2de]">
                    <div className="h-[28px] flex items-center justify-center border-b border-[#dcdad6]"><svg viewBox="0 0 10 7" className="w-[10px] h-[7px]"><path d="M0 7H10L5 0Z" fill="#666" /></svg></div>
                    <div className="h-[168px]" />
                    <div className="h-[106px] bg-[#ecebe7] border-t border-[#d3d1cd]" />
                    <div className="flex-1 flex items-center justify-center border-t border-[#dcdad6]"><svg viewBox="0 0 10 7" className="w-[10px] h-[7px]"><path d="M0 0H10L5 7Z" fill="#666" /></svg></div>
                </div>
            </div>
        </div>
    </div>
);

const Check = ({ on, className = '' }: { on?: boolean; className?: string }) => (
    <div className={`w-[16px] h-[16px] rounded-[2px] border border-[#76797c] bg-[#31363b] flex items-center justify-center shrink-0 ${className}`}>
        <div className={`w-[10px] h-[10px] rounded-[1px] ${on ? 'bg-[#3daee9]' : 'bg-[#a8a9aa]'}`} />
    </div>
);

const DarkInput = ({ value }: { value: string }) => (
    <div className="w-[172px] h-[46px] bg-[#232629] flex items-center pl-[8px]">{value}</div>
);

const SpinDark = ({ value, className = '' }: { value: string; className?: string }) => (
    <div className={`h-[47px] flex items-center justify-between px-[5px] border border-[#4e5256] rounded-[2px] bg-[#232629] shrink-0 ${className}`}>
        <svg viewBox="0 0 8 5" className="w-[6px] h-[4px]"><path d="M0 0H8L4 5Z" fill="#a8a9aa" /></svg>
        <span className="whitespace-nowrap">{value}</span>
        <svg viewBox="0 0 8 5" className="w-[6px] h-[4px]"><path d="M0 5H8L4 0Z" fill="#a8a9aa" /></svg>
    </div>
);

const GroupHead = ({ title }: { title: string }) => (
    <div className="h-[40px] flex items-center gap-[8px]">
        <div className="flex-1 h-px bg-[#76797c] -mt-[6px]" />
        <span className="italic border-b-[2px] border-[#eff0f1] leading-[34px]">{title}</span>
        <div className="flex-1 h-px bg-[#76797c] -mt-[6px]" />
    </div>
);

const GroupTitle = ({ title, className = '' }: { title: string; className?: string }) => (
    <div className={`absolute -left-px -top-[20px] h-[44px] flex items-center justify-center bg-gradient-to-b from-[#2a5ea6] to-[#3f8ae6] rounded-t-[2px] border border-[#4a78b8] text-white ${className}`}>{title}</div>
);

const SettingLabel = ({ width, children }: { width: string; children: React.ReactNode }) => (
    <span className={`flex justify-end shrink-0 whitespace-nowrap ${width}`}>{children}</span>
);

const GifexWindow = () => (
    <div className="absolute left-[689px] top-[169px] w-[1077px] h-[688px] z-20 rounded-t-[12px] bg-[#31363b] text-[#eff0f1] shadow-[0_4px_24px_rgba(0,0,0,0.45)] overflow-hidden">
        <div className="relative h-[60px] flex items-center justify-center bg-gradient-to-b from-[#4e4c45] to-[#3c3b37] font-bold text-[#d3d2cd]">
            Gifex v1
            <div className="absolute right-[12px] top-[14px] flex gap-[8px]">
                <div className="w-[32px] h-[32px] rounded-full bg-[#6b6963] border border-[#85837d] flex items-center justify-center"><div className="w-[16px] h-[3px] bg-[#3c3b37]" /></div>
                <div className="w-[32px] h-[32px] rounded-full bg-[#6b6963] border border-[#85837d] flex items-center justify-center"><div className="w-[14px] h-[14px] border-[2px] border-[#3c3b37]" /></div>
                <div className="w-[32px] h-[32px] rounded-full bg-[#e0562a] flex items-center justify-center text-[20px] leading-none text-[#3c3b37] font-bold">x</div>
            </div>
        </div>
        <div className="relative flex gap-[7px] pl-[11px] pt-[31px]">
            <div className="relative w-[583px] h-[585px] border border-[#76797c] pl-[11px] pr-[11px] pt-[101px]">
                <GroupTitle title="Record" className="w-[113px]" />
                <div className="grid grid-cols-[94px_172px_103px_172px] gap-x-[6px] gap-y-[6px] items-center">
                    <span className="justify-self-end whitespace-nowrap">x :</span>
                    <DarkInput value="0" />
                    <span className="justify-self-end whitespace-nowrap">y :</span>
                    <DarkInput value="0" />
                    <span className="justify-self-end whitespace-nowrap">Width :</span>
                    <DarkInput value="3840" />
                    <span className="justify-self-end whitespace-nowrap">Height :</span>
                    <DarkInput value="2160" />
                </div>
                <div className="mt-[96px] h-[46px] w-[559px] border border-[#76797c] flex items-center justify-center gap-[6px]">
                    <svg viewBox="0 0 26 36" className="w-[26px] h-[36px]">
                        <rect x="3" y="3" width="20" height="30" fill="none" stroke="#9a9b9c" strokeWidth="2" />
                        <path d="M0 0H6V6H0ZM20 0H26V6H20ZM0 30H6V36H0ZM20 30H26V36H20Z" fill="#9a9b9c" />
                    </svg>
                    Select Region
                </div>
                <div className="mt-[96px] h-[44px] w-[559px] bg-gradient-to-b from-[#b90000] to-[#e60000] flex items-center justify-center font-bold text-white">
                    <div className="w-[18px] h-[24px] border-[2px] border-white mr-[10px]" />
                    (00:00:12) Stop Recording
                </div>
            </div>
            <div className="relative w-[465px] h-[585px] border border-[#76797c] pl-[10px] pr-[11px]">
                <GroupTitle title="Application settings" className="w-[283px]" />
                <div className="mt-[41px] h-[34px] flex items-center">
                    <SettingLabel width="w-[218px]">Dark theme :</SettingLabel>
                    <Check on className="ml-[7px]" />
                </div>
                <div className="mt-[36px]"><GroupHead title="Selection settings" /></div>
                <div className="mt-[30px] h-[34px] flex items-center">
                    <SettingLabel width="w-[226px]">Decoration hint:</SettingLabel>
                    <Check className="ml-[8px]" />
                </div>
                <div className="mt-[6px] flex items-center">
                    <SettingLabel width="w-[226px]">Selection border:</SettingLabel>
                    <SpinDark value="3 px" className="ml-[6px] w-[107px]" />
                </div>
                <div className="mt-[36px]"><GroupHead title="Capture settings" /></div>
                <div className="mt-[31px] h-[34px] flex items-center">
                    <SettingLabel width="w-[350px]">Capture cursor :</SettingLabel>
                    <Check className="ml-[7px]" />
                </div>
                <div className="mt-[6px] h-[34px] flex items-center">
                    <SettingLabel width="w-[350px]">Follow cursor :</SettingLabel>
                    <Check className="ml-[7px]" />
                </div>
                <div className="mt-[6px] h-[34px] flex items-center">
                    <SettingLabel width="w-[350px]">Capture rectangle visible :</SettingLabel>
                    <Check className="ml-[7px]" />
                </div>
                <div className="mt-[5px] flex items-center">
                    <SettingLabel width="w-[350px]">Capture rectangle border :</SettingLabel>
                    <SpinDark value="3 p" className="ml-[5px] w-[87px]" />
                </div>
            </div>
        </div>
        <svg viewBox="0 0 24 36" className="absolute left-[342px] top-[521px] w-[24px] h-[38px]">
            <path d="M1 1V28L8 21L13 33L18 31L13 20H22Z" fill="#fff" stroke="#111" strokeWidth="1.5" />
        </svg>
    </div>
);

export default function App() {
    return (
        <div className="relative w-[3840px] h-[2160px] overflow-hidden flex flex-col bg-[#3c3b37] font-['Lato',sans-serif] text-[29px] tracking-[0.65px] text-black">
            <TopBar />
            <div className="flex-1 min-h-0 flex">
                <Dock />
                <div className="flex-1 min-w-0 flex flex-col">
                    <div className="relative h-[56px] shrink-0 flex items-center justify-center font-bold text-[30px] tracking-[1px] text-[#a9a7a1]">
                        WheeledBipedRobot - Choreonoid-ROS
                        <div className="absolute right-[10px] top-[12px] flex gap-[8px]">
                            <div className="w-[32px] h-[32px] rounded-full bg-[#5b5953] flex items-center justify-center"><div className="w-[16px] h-[2px] bg-[#3c3b37]" /></div>
                            <div className="w-[32px] h-[32px] rounded-full bg-[#5b5953] flex items-center justify-center"><div className="w-[14px] h-[12px] border-[2px] border-[#3c3b37]" /></div>
                            <div className="w-[32px] h-[32px] rounded-full bg-[#5b5953] flex items-center justify-center text-[20px] leading-none text-[#3c3b37]">x</div>
                        </div>
                    </div>
                    <div className="flex-1 min-h-0 flex flex-col bg-[#efece7]">
                        <div className="h-[38px] shrink-0 flex items-center pl-[17px]">
                            <span className="w-[67px]">File</span>
                            <span className="w-[73px]">Edit</span>
                            <span className="w-[85px]">View</span>
                            <span className="w-[91px]">Tools</span>
                            <span className="w-[103px]">Filters</span>
                            <span className="w-[126px]">Options</span>
                            <span>Help</span>
                        </div>
                        <Toolbars />
                        <div className="flex-1 min-h-0 flex">
                            <LeftColumn />
                            <div className="ml-[8px] w-[2071px] shrink-0 flex flex-col">
                                <Viewport />
                                <Messages />
                            </div>
                            <RightColumn />
                        </div>
                    </div>
                </div>
            </div>
            <GifexWindow />
        </div>
    );
}
